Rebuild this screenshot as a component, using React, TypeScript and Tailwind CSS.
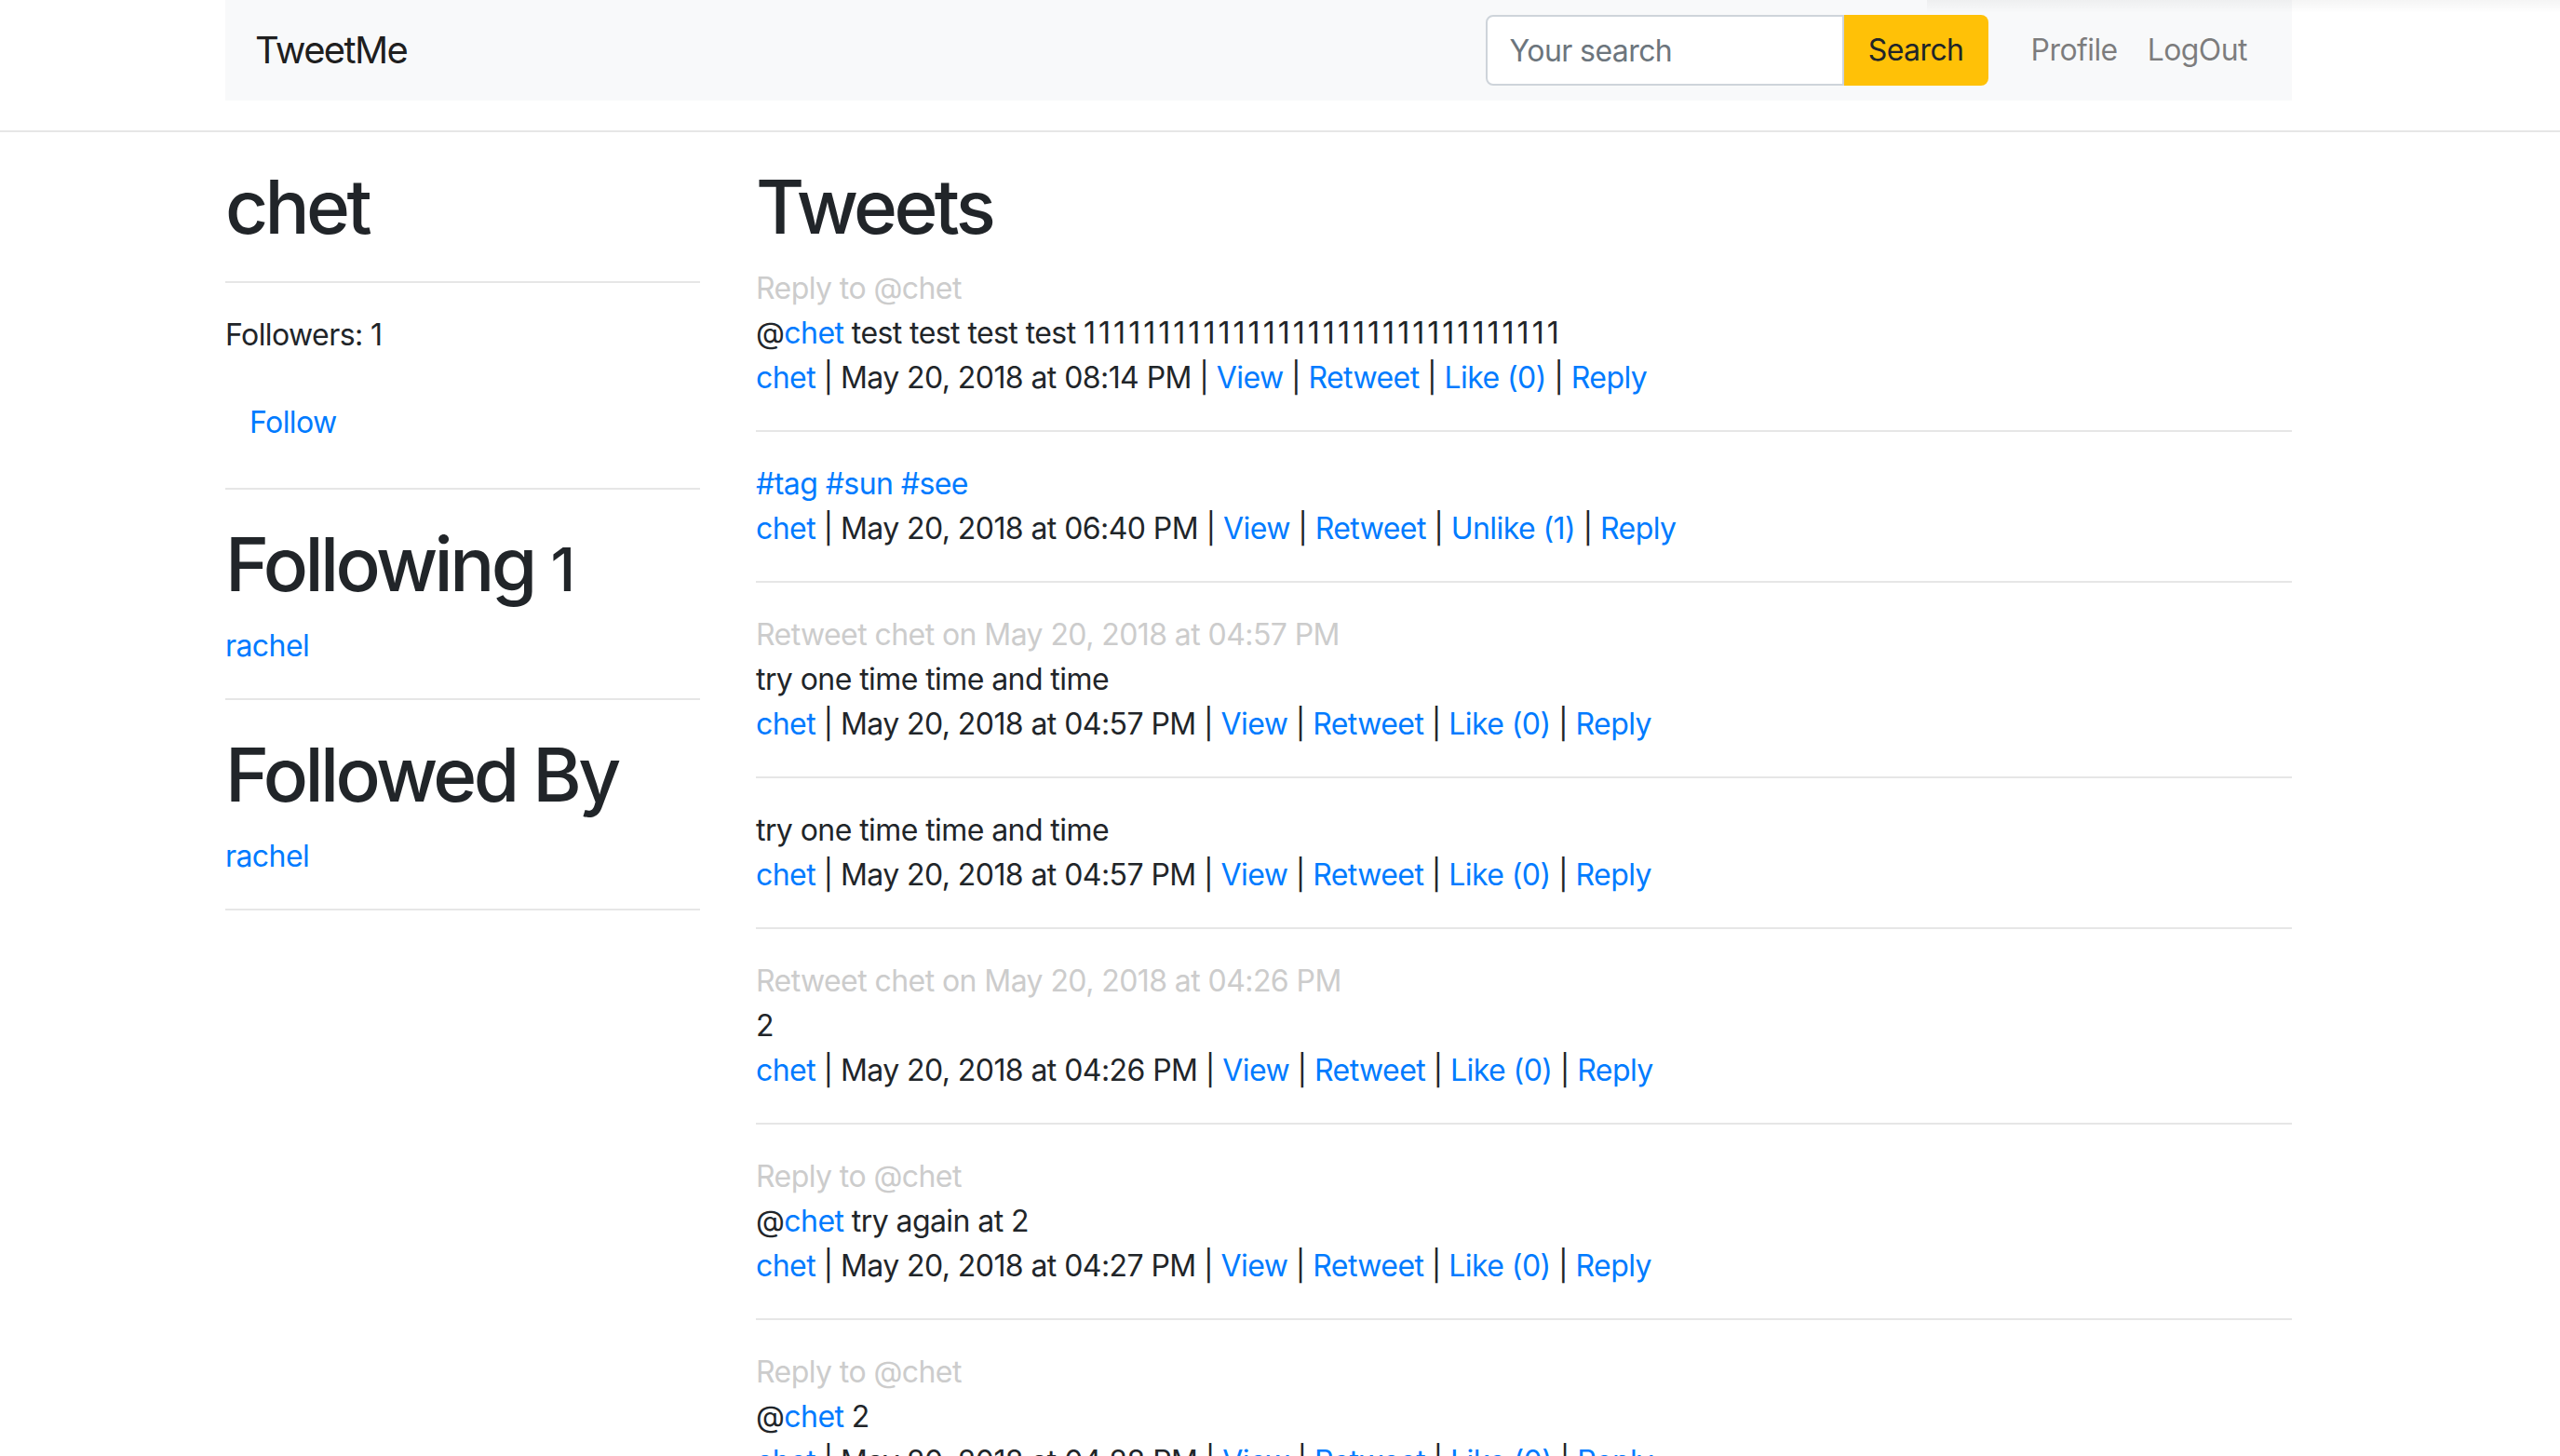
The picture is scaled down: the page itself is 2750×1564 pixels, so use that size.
import { Fragment } from "react";

type Tweet = {
  label?: string;
  body: React.ReactNode;
  date: string;
  liked?: boolean;
  likes: number;
};

// the reference font has wider "1"s than Inter, so the long run gets some spacing
const ones = <span className="tracking-[0.095em]">11111111111111111111111111111111</span>;

const tweets: Tweet[] = [
  {
    label: "Reply to @chet",
    body: (
      <>
        @<a className="text-[#007bff]">chet</a> test test test test {ones}
      </>
    ),
    date: "May 20, 2018 at 08:14 PM",
    likes: 0,
  },
  {
    body: (
      <>
        <a className="text-[#007bff]">#tag</a> <a className="text-[#007bff]">#sun</a>{" "}
        <a className="text-[#007bff]">#see</a>
      </>
    ),
    date: "May 20, 2018 at 06:40 PM",
    liked: true,
    likes: 1,
  },
  {
    label: "Retweet chet on May 20, 2018 at 04:57 PM",
    body: "try one time time and time",
    date: "May 20, 2018 at 04:57 PM",
    likes: 0,
  },
  {
    body: "try one time time and time",
    date: "May 20, 2018 at 04:57 PM",
    likes: 0,
  },
  {
    label: "Retweet chet on May 20, 2018 at 04:26 PM",
    body: "2",
    date: "May 20, 2018 at 04:26 PM",
    likes: 0,
  },
  {
    label: "Reply to @chet",
    body: (
      <>
        @<a className="text-[#007bff]">chet</a> try again at 2
      </>
    ),
    date: "May 20, 2018 at 04:27 PM",
    likes: 0,
  },
  {
    label: "Reply to @chet",
    body: (
      <>
        @<a className="text-[#007bff]">chet</a> 2
      </>
    ),
    date: "May 20, 2018 at 04:28 PM",
    likes: 0,
  },
];

function Rule() {
  return <hr className="my-[32px] border-0 border-t-2 border-[#e6e6e6]" />;
}

function TweetItem({ tweet }: { tweet: Tweet }) {
  const link = "text-[#007bff]";
  return (
    <div>
      {tweet.label && <div className="text-[#cccccc]">{tweet.label}</div>}
      <div>{tweet.body}</div>
      <div>
        <a className={link}>chet</a> | {tweet.date} | <a className={link}>View</a> |{" "}
        <a className={link}>Retweet</a> |{" "}
        <a className={link}>
          {tweet.liked ? "Unlike" : "Like"} ({tweet.likes})
        </a>{" "}
        | <a className={link}>Reply</a>
      </div>
    </div>
  );
}

export default function App() {
  const h1 = "mb-[16px] text-[80px] font-medium leading-[96px] tracking-[-0.045em]";

  return (
    <div
      className="relative h-[1564px] overflow-hidden bg-white text-[32px] leading-[48px] tracking-[-0.018em] text-[#212529]"
      style={{ fontFamily: "Inter, 'Noto Sans', sans-serif" }}
    >
      <div className="pointer-events-none absolute right-0 top-0 h-[14px] w-[680px] bg-gradient-to-b from-black/[0.04] to-transparent" />

      <nav className="ml-[242px] flex h-[108px] w-[2220px] items-center bg-[#f8f9fa] px-[32px]">
        <span className="text-[40px] leading-[60px] tracking-[-0.04em] text-black/90">TweetMe</span>
        <form className="ml-auto flex h-[76px]" onSubmit={(e) => e.preventDefault()}>
          <input
            placeholder="Your search"
            className="h-[76px] w-[385px] rounded-l-[8px] border-2 border-[#ced4da] bg-white px-[24px] text-[32px] placeholder:text-[#6c757d] focus:outline-none"
          />
          <button
            type="submit"
            className="h-[76px] w-[155px] rounded-r-[8px] bg-[#ffc107] text-[32px] text-[#212529]"
          >
            Search
          </button>
        </form>
        <ul className="ml-[30px] flex">
          <li>
            <a className="px-[16px] text-black/50">Profile</a>
          </li>
          <li>
            <a className="px-[16px] text-black/50">LogOut</a>
          </li>
        </ul>
      </nav>

      <Rule />

      <div className="ml-[242px] flex w-[2220px] gap-[60px]">
        <aside className="w-[510px]">
          <h1 className={h1}>chet</h1>
          <Rule />
          <p className="mb-[32px]">Followers: 1</p>
          <button className="border-2 border-transparent px-[24px] py-[12px] text-[#007bff]">
            Follow
          </button>
          <Rule />
          <h1 className={h1}>
            Following <small className="text-[64px] leading-none">1</small>
          </h1>
          <div>
            <a className="text-[#007bff]">rachel</a>
          </div>
          <Rule />
          <h1 className={h1}>Followed By</h1>
          <div>
            <a className="text-[#007bff]">rachel</a>
          </div>
          <Rule />
        </aside>

        <main className="w-[1650px]">
          <h1 className={h1}>Tweets</h1>
          {tweets.map((t, i) => (
            <Fragment key={i}>
              {i > 0 && <Rule />}
              <TweetItem tweet={t} />
            </Fragment>
          ))}
        </main>
      </div>
    </div>
  );
}
